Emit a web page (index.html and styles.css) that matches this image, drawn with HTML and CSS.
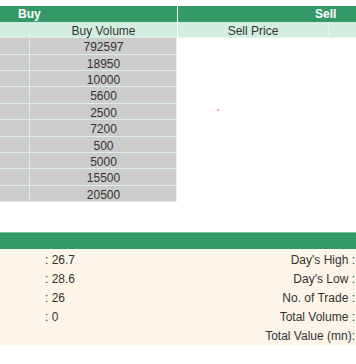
FILE: index.html
```html
<!DOCTYPE html>
<html>
<head>
<meta charset="utf-8">
<link rel="stylesheet" href="styles.css">
</head>
<body>
<div class="page">
  <div class="top">
    <div class="buy">
      <div class="hdr buy-hdr">Buy</div>
      <div class="grid">
        <div class="sub"></div><div class="sub">Buy Volume</div>
        <div class="c"></div><div class="c">792597</div>
        <div class="c"></div><div class="c">18950</div>
        <div class="c"></div><div class="c">10000</div>
        <div class="c"></div><div class="c">5600</div>
        <div class="c"></div><div class="c">2500</div>
        <div class="c"></div><div class="c">7200</div>
        <div class="c"></div><div class="c">500</div>
        <div class="c"></div><div class="c">5000</div>
        <div class="c"></div><div class="c">15500</div>
        <div class="c"></div><div class="c">20500</div>
      </div>
    </div>
    <div class="sell">
      <div class="hdr sell-hdr">Sell</div>
      <div class="sell-sub">
        <div class="sub sp">Sell Price</div><div class="sub sv"></div>
      </div>
      <div class="sell-body"><span class="dot"></span></div>
    </div>
  </div>
  <div class="stats">
    <div class="stats-hdr"></div>
    <div class="stats-body">
      <div class="srow"><span class="val">: 26.7</span><span class="lbl">Day's High :</span></div>
      <div class="srow"><span class="val">: 28.6</span><span class="lbl">Day's Low :</span></div>
      <div class="srow"><span class="val">: 26</span><span class="lbl">No. of Trade :</span></div>
      <div class="srow"><span class="val">: 0</span><span class="lbl">Total Volume :</span></div>
      <div class="srow"><span class="val"></span><span class="lbl">Total Value (mn):</span></div>
    </div>
  </div>
</div>
</body>
</html>
```
FILE: styles.css
```css
html, body {
  margin: 0;
  padding: 0;
  background: #ffffff;
}
body {
  width: 356px;
  height: 364px;
  overflow: hidden;
  font-family: "Liberation Sans", Arial, sans-serif;
  font-size: 12px;
  color: #333333;
}
.page {
  width: 356px;
}
.top {
  display: flex;
  padding-top: 6px;
  width: 520px;
}
.buy {
  width: 177px;
  flex: none;
}
.sell {
  margin-left: 1px;
  width: 300px;
  flex: none;
}
.hdr {
  height: 16px;
  line-height: 16px;
  background: #339966;
  color: #ffffff;
  font-weight: bold;
  font-size: 12px;
}
.buy-hdr {
  padding-left: 18px;
}
.sell-hdr {
  padding-left: 137px;
}
.grid {
  display: grid;
  grid-template-columns: 29px 1fr;
  grid-auto-rows: 15.36px;
  gap: 1px;
  padding-bottom: 1px;
  background: #ddefe5;
}
.sub {
  background: #d3eee0;
  text-align: center;
  line-height: 18px;
}
.c {
  background: #cccccc;
  text-align: center;
  line-height: 18px;
}
.sell-sub {
  display: flex;
  gap: 1px;
  background: #e8f5ee;
  height: 15.36px;
  padding-bottom: 1px;
}
.sp {
  width: 150px;
}
.sv {
  flex: 1;
}
.sell-body {
  position: relative;
  height: 164px;
  border-left: 1px solid #e6f1ea;
  margin-left: -2px;
}
.dot {
  position: absolute;
  left: 40px;
  top: 71px;
  width: 2px;
  height: 2px;
  background: #ff9a9a;
}
.stats {
  margin-top: 30px;
}
.stats-hdr {
  height: 16px;
  background: #339966;
  border-top: 1px solid #7cc49c;
}
.stats-body {
  background: #fdf5e8;
  padding-top: 1px;
  height: 95px;
}
.srow {
  display: flex;
  height: 19px;
  line-height: 20px;
}
.val {
  width: 45px;
  padding-left: 45px;
  flex: none;
}
.lbl {
  flex: 1;
  text-align: right;
  padding-right: 1px;
}
```
